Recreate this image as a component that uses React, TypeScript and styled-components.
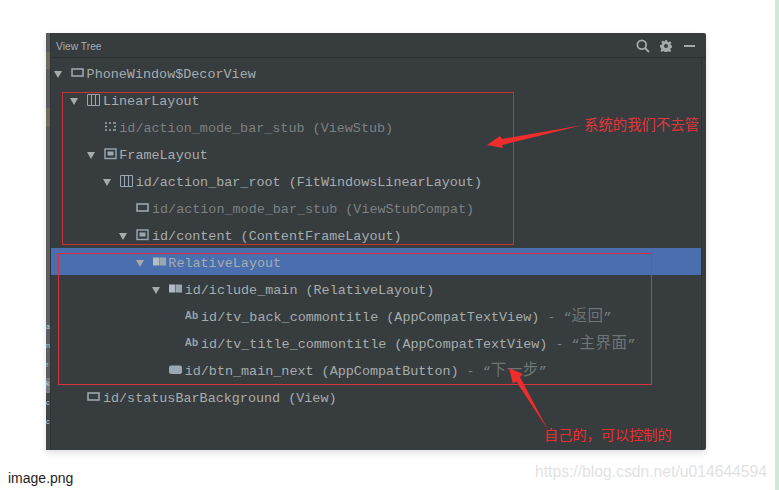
import React from "react";
import styled, { createGlobalStyle } from "styled-components";

const TEXT = "#a6adad";
const DIM = "#7b8181";
const ICON = "#9aa7b0";
const RED = "#f02d2d";

type IconKind = "view" | "linear" | "stub" | "frame" | "relative" | "text" | "button";

type TreeNode = {
	depth: number;
	name: string;
	icon: IconKind;
	open?: boolean;
	dim?: boolean;
	selected?: boolean;
	hint?: string;
};

const NODES: Array<TreeNode> = [
	{ depth: 0, name: "PhoneWindow$DecorView", icon: "view", open: true },
	{ depth: 1, name: "LinearLayout", icon: "linear", open: true },
	{ depth: 2, name: "id/action_mode_bar_stub (ViewStub)", icon: "stub", dim: true },
	{ depth: 2, name: "FrameLayout", icon: "frame", open: true },
	{ depth: 3, name: "id/action_bar_root (FitWindowsLinearLayout)", icon: "linear", open: true },
	{ depth: 4, name: "id/action_mode_bar_stub (ViewStubCompat)", icon: "view", dim: true },
	{ depth: 4, name: "id/content (ContentFrameLayout)", icon: "frame", open: true },
	{ depth: 5, name: "RelativeLayout", icon: "relative", open: true, selected: true },
	{ depth: 6, name: "id/iclude_main (RelativeLayout)", icon: "relative", open: true },
	{ depth: 7, name: "id/tv_back_commontitle (AppCompatTextView)", icon: "text", hint: "返回" },
	{ depth: 7, name: "id/tv_title_commontitle (AppCompatTextView)", icon: "text", hint: "主界面" },
	{ depth: 6, name: "id/btn_main_next (AppCompatButton)", icon: "button", hint: "下一步" },
	{ depth: 1, name: "id/statusBarBackground (View)", icon: "view" },
];

const NodeIcon: React.FC<{ kind: IconKind }> = ({ kind }) => {
	if (kind === "text") return <AbGlyph>Ab</AbGlyph>;
	return (
		<svg width="13" height="12" viewBox="0 0 13 12" fill="none">
			{kind === "view" && <rect x="1" y="2" width="11" height="7" stroke={ICON} strokeWidth="1.6" />}
			{kind === "linear" && (
				<path d="M.5 .5h12v11H.5zM4.5 .5v11M8.5 .5v11" stroke={ICON} strokeWidth="1" />
			)}
			{kind === "stub" && (
				<path
					d="M1 2h2M5 2h2M9 2h3M1 5.5h2M10 5.5h2M1 9h2M5 9h2M9 9h3"
					stroke={ICON}
					strokeWidth="1.5"
				/>
			)}
			{kind === "frame" && (
				<>
					<rect x="1" y="1" width="11" height="9.5" stroke={ICON} strokeWidth="1.4" />
					<rect x="3.5" y="3.5" width="6" height="4" fill={ICON} />
				</>
			)}
			{kind === "relative" && (
				<>
					<rect x="0" y="1.5" width="6" height="8" fill="#b2bcc2" />
					<rect x="6.5" y="1.5" width="6.5" height="8" fill={ICON} />
				</>
			)}
			{kind === "button" && <rect x="0" y="1.5" width="13" height="8.5" rx="2" fill={ICON} />}
		</svg>
	);
};

const App: React.FC = () => {
	return (
		<Page>
			<GlobalStyle />
			<Shot>
				<LeftStrip>
					<StripLetter>a</StripLetter>
					<StripLetter>n</StripLetter>
					<StripLetter>r</StripLetter>
					<StripLetter>k</StripLetter>
					<StripLetter>c</StripLetter>
					<StripLetter>c</StripLetter>
				</LeftStrip>
				<ToolHeader>
					<ToolTitle>View Tree</ToolTitle>
					<ToolIcons>
						<svg width="14" height="14" viewBox="0 0 14 14" fill="none">
							<circle cx="5.8" cy="5.8" r="4.4" stroke="#a4aaac" strokeWidth="1.8" />
							<path d="M9 9l4 4" stroke="#a4aaac" strokeWidth="2" />
						</svg>
						<svg width="12" height="12" viewBox="0 0 24 24" fill="#a4aaac">
							<path
								fillRule="evenodd"
								d="M10 0h4l.8 3.6 2.2.9 3.1-2 2.8 2.8-2 3.1.9 2.2 3.2.8v4l-3.6.8-.9 2.2 2 3.1-2.8 2.8-3.1-2-2.2.9-.8 3.2h-4l-.8-3.6-2.2-.9-3.1 2-2.8-2.8 2-3.1-.9-2.2L0 14v-4l3.6-.8.9-2.2-2-3.1 2.8-2.8 3.1 2 2.2-.9zM12 8a4 4 0 1 0 0 8 4 4 0 0 0 0-8z"
							/>
						</svg>
						<MinimizeBar />
					</ToolIcons>
				</ToolHeader>
				<Tree>
					{NODES.map((node) => (
						<Row key={node.name} $depth={node.depth} $selected={!!node.selected}>
							<Arrow $open={!!node.open} />
							<IconSlot>
								<NodeIcon kind={node.icon} />
							</IconSlot>
							<Label $dim={!!node.dim}>
								{node.name}
								{node.hint && (
									<Hint>
										{" - “"}
										<HintCjk>{node.hint}</HintCjk>
										{"”"}
									</Hint>
								)}
							</Label>
						</Row>
					))}
				</Tree>
				<SystemBox />
				<OwnBox />
				<Arrows width="660" height="417" viewBox="0 0 660 417">
					<path d="M537 92L456 106 454 103 441 112 457 115 456 112z" fill={RED} />
					<path d="M502 397L474 344 477 341 463 335 467 351 470 348z" fill={RED} />
				</Arrows>
				<SystemNote>系统的我们不去管</SystemNote>
				<OwnNote>{"自己的\uFF0C可以控制的"}</OwnNote>
			</Shot>
			<Footer>
				<Caption>image.png</Caption>
				<Watermark>https://blog.csdn.net/u014644594</Watermark>
			</Footer>
			<EdgeStrip />
		</Page>
	);
};

const GlobalStyle = createGlobalStyle`
	html, body {
		margin: 0;
		padding: 0;
		background: #ffffff;
		overflow: hidden;
	}
`;

const Page = styled.div`
	position: relative;
	width: 779px;
	height: 490px;
	padding-top: 33px;
	box-sizing: border-box;
	overflow: hidden;
`;

const Shot = styled.div`
	position: relative;
	width: 660px;
	height: 417px;
	margin-left: 46px;
	background: #373c3f;
	border-radius: 0 2px 2px 0;
	box-shadow: 0 3px 6px rgba(0, 0, 0, 0.12);
	box-sizing: border-box;
	padding-left: 5px;
	padding-right: 5px;

	/* thin divider just inside the right edge */
	&::after {
		content: "";
		position: absolute;
		left: 655px;
		top: 25px;
		bottom: 0;
		width: 1px;
		background: #2f3336;
	}
`;

const LeftStrip = styled.div`
	position: absolute;
	left: 0;
	top: 0;
	bottom: 0;
	width: 5px;
	display: flex;
	flex-direction: column;
	align-items: flex-start;
	gap: 12px;
	padding-top: 290px;
	box-sizing: border-box;
	background: linear-gradient(
		to bottom,
		#595d5f 0,
		#595d5f 19px,
		#6d6a60 19px,
		#6d6a60 36px,
		#595d5f 36px,
		#595d5f 75px,
		#6e6a5c 75px,
		#6e6a5c 94px,
		#5c6062 94px,
		#5c6062 345px,
		#777a7c 345px,
		#777a7c 360px,
		#43474a 360px,
		#43474a 417px
	);
	border-right: 1px solid #2f3336;
`;

const StripLetter = styled.span`
	font: 7px/7px "Liberation Sans", Arial, sans-serif;
	color: #c8ccce;
`;

const ToolHeader = styled.div`
	display: flex;
	align-items: center;
	justify-content: space-between;
	height: 25px;
	margin-left: -5px;
	margin-right: -5px;
	padding: 1px 11px 0 10px;
	box-sizing: border-box;
	border-bottom: 1px solid #2d3032;
`;

const ToolTitle = styled.span`
	font: 10.3px "Liberation Sans", Arial, sans-serif;
	color: #a3adb3;
	margin-top: 2px;
`;

const ToolIcons = styled.div`
	display: flex;
	align-items: center;
	gap: 10px;
`;

const MinimizeBar = styled.span`
	width: 11px;
	height: 2px;
	margin-left: 2px;
	background: #a4aaac;
`;

const Tree = styled.div`
	display: flex;
	flex-direction: column;
	padding-top: 1px;
`;

const Row = styled.div<{ $depth: number; $selected: boolean }>`
	display: flex;
	align-items: center;
	height: 27px;
	padding-left: ${(props) => props.$depth * 16.35}px;
	background: ${(props) => (props.$selected ? "#4b6eaf" : "transparent")};
`;

const Arrow = styled.span<{ $open: boolean }>`
	flex: none;
	width: 0;
	height: 0;
	margin: 3px 8px 0 3px;
	border-left: 4.5px solid transparent;
	border-right: 4.5px solid transparent;
	border-top: 7px solid ${(props) => (props.$open ? "#a5abad" : "transparent")};
`;

const IconSlot = styled.span`
	flex: none;
	display: flex;
	align-items: center;
	justify-content: center;
	width: 13px;
	height: 14px;
	margin-left: 1px;
	margin-right: 2.6px;
`;

const AbGlyph = styled.span`
	font: bold 10px "Liberation Sans", Arial, sans-serif;
	color: ${ICON};
	margin-left: -1px;
`;

const Label = styled.span<{ $dim: boolean }>`
	font: 13.43px/16px "Liberation Mono", monospace;
	white-space: pre;
	color: ${(props) => (props.$dim ? DIM : TEXT)};
	margin-top: 5px;
`;

const Hint = styled.span`
	color: ${DIM};
`;

const HintCjk = styled.span`
	font: 15.5px/0 "Noto Sans CJK SC", sans-serif;
	color: #6f7575;
	letter-spacing: 0.5px;
`;

const SystemBox = styled.div`
	position: absolute;
	z-index: 2;
	left: 16px;
	top: 59px;
	width: 452px;
	height: 153px;
	box-sizing: border-box;
	border: 1px solid #c9303a;
	pointer-events: none;
`;

const OwnBox = styled.div`
	position: absolute;
	z-index: 2;
	left: 12px;
	top: 220px;
	width: 594px;
	height: 132px;
	box-sizing: border-box;
	border: 1px solid #d9323f;
	pointer-events: none;
`;

const Arrows = styled.svg`
	position: absolute;
	z-index: 3;
	left: 0;
	top: 0;
	pointer-events: none;
`;

const SystemNote = styled.span`
	position: absolute;
	left: 538px;
	top: 81px;
	font: 14.4px/20px "Noto Sans CJK SC", sans-serif;
	color: #e2363a;
	white-space: nowrap;
`;

const OwnNote = styled.span`
	position: absolute;
	left: 498px;
	top: 391px;
	font: 14.2px/20px "Noto Sans CJK SC", sans-serif;
	color: ${RED};
	white-space: nowrap;
`;

const Footer = styled.div`
	position: relative;
	height: 40px;
`;

const Caption = styled.span`
	position: absolute;
	left: 8px;
	top: 20px;
	font: 14px/17px "Liberation Sans", Arial, sans-serif;
	color: #1f2328;
`;

const Watermark = styled.span`
	position: absolute;
	left: 535px;
	top: 12px;
	font: 15.7px/20px "Liberation Sans", Arial, sans-serif;
	color: #e2e2e2;
	white-space: nowrap;
`;

const EdgeStrip = styled.div`
	position: absolute;
	right: 0;
	top: 0;
	bottom: 0;
	width: 4px;
	background: #cfe9d3;
`;

export default App;
